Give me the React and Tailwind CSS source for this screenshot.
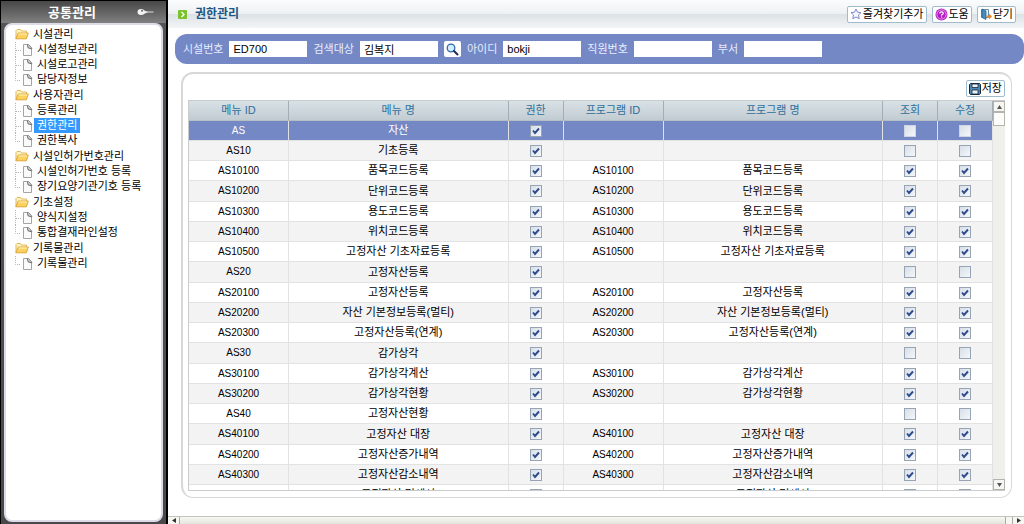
import React, { useState } from "react";

const tree = [
  ["시설관리", ["시설정보관리", "시설로고관리", "담당자정보"]],
  ["사용자관리", ["등록관리", "권한관리", "권한복사"]],
  ["시설인허가번호관리", ["시설인허가번호 등록", "장기요양기관기호 등록"]],
  ["기초설정", ["양식지설정", "통합결재라인설정"]],
  ["기록물관리", ["기록물관리"]],
];

const rows = [
  ["AS", "자산", false],
  ["AS10", "기초등록", false],
  ["AS10100", "품목코드등록", true],
  ["AS10200", "단위코드등록", true],
  ["AS10300", "용도코드등록", true],
  ["AS10400", "위치코드등록", true],
  ["AS10500", "고정자산 기초자료등록", true],
  ["AS20", "고정자산등록", false],
  ["AS20100", "고정자산등록", true],
  ["AS20200", "자산 기본정보등록(멀티)", true],
  ["AS20300", "고정자산등록(연계)", true],
  ["AS30", "감가상각", false],
  ["AS30100", "감가상각계산", true],
  ["AS30200", "감가상각현황", true],
  ["AS40", "고정자산현황", false],
  ["AS40100", "고정자산 대장", true],
  ["AS40200", "고정자산증가내역", true],
  ["AS40300", "고정자산감소내역", true],
  ["AS40400", "고정자산 명세서", true],
];

function FolderIcon() {
  return (
    <svg width="14" height="12" viewBox="0 0 14 12" className="shrink-0" aria-hidden="true">
      <path d="M1 10.500V2.500L2 1.500H5.500L6.500 3H11.500V5" fill="#fdf3c4" stroke="#e4b75a" />
      <path d="M0.800 10.800L3.300 5H13.300L11.300 10.800Z" fill="#fcd25c" stroke="#dca63c" />
      <path d="M3.600 6H12.200" stroke="#fff4c0" />
    </svg>
  );
}

function PageIcon() {
  return (
    <svg width="11" height="12" viewBox="0 0 11 12" className="shrink-0" aria-hidden="true">
      <path d="M1.500 0.500H6.500L9.500 4V11.500H1.500Z" fill="#fafafa" stroke="#a4a4a4" />
      <path d="M5.500 0.500L6 3.800L9.800 4.800" fill="#ddd" stroke="#666" />
      <path d="M6.500 0.500L10 4.500" stroke="#888" />
    </svg>
  );
}

function Branch({ last }) {
  return (
    <svg width="7" height="15" viewBox="0 0 7 15" className="shrink-0" aria-hidden="true">
      <path d={last ? "M0.500 0V8.500H6" : "M0.500 0V15M1 8.500H6"} fill="none" stroke="#b4b4b4" strokeDasharray="1 1" />
    </svg>
  );
}

function Sidebar() {
  return (
    <aside className="flex w-[168px] shrink-0 flex-col border-t border-r-2 border-l border-black bg-linear-to-b from-[#555] to-[#4a484b] px-[3px] pb-[2px]">
      <header className="-mx-[3px] flex h-[22px] shrink-0 items-center bg-linear-to-b from-[#484848] to-[#808080] pr-3 pl-[47px] text-white">
        <h1 className="text-[13px] leading-none font-bold">공통관리</h1>
        <svg width="17" height="8" viewBox="0 0 17 8" className="ml-auto" aria-hidden="true">
          <ellipse cx="4" cy="4" rx="3.500" ry="3" fill="#f4f4f4" />
          <path d="M6 2L11 4L6 6.500Z" fill="#f0f0f0" />
          <path d="M9 4H16.500" stroke="#ddd" />
          <circle cx="5" cy="2.800" r="1" fill="#666" />
        </svg>
      </header>
      <nav className="flex-1 overflow-hidden rounded-lg border-2 border-[#dcdce8] bg-white pt-px pl-[9px]">
        <ul>
          {tree.map(([name, items]) => (
            <li key={name}>
              <a href="#" className="flex h-4 items-center gap-1">
                <FolderIcon />
                {name}
              </a>
              <ul>
                {items.map((item, i) => (
                  <li key={item}>
                    <a href="#" className="flex h-[15px] items-center">
                      <Branch last={i === items.length - 1} />
                      <PageIcon />
                      <span className={item === "권한관리" ? "ml-px bg-[#3399ff] px-[3px] leading-[15px] text-white" : "ml-1"}>{item}</span>
                    </a>
                  </li>
                ))}
              </ul>
            </li>
          ))}
        </ul>
      </nav>
    </aside>
  );
}

function ToolButton({ children }) {
  return (
    <button type="button" className="flex h-[17px] items-center gap-px rounded-xs border border-[#9ebccd] bg-white px-[2px] text-[11px] leading-none whitespace-nowrap text-black">
      {children}
    </button>
  );
}

function TitleBar() {
  return (
    <header className="flex h-7 shrink-0 items-center bg-[linear-gradient(#fbfcfd,#eef1f3_48%,#dce2e6_52%,#f3f5f6)] pr-2 pl-[10px]">
      <svg width="9" height="9" viewBox="0 0 9 9" aria-hidden="true">
        <rect width="9" height="9" rx="1" fill="#7cc22c" />
        <path d="M3.500 2L6 4.500L3.500 7" fill="none" stroke="#fff" strokeWidth="1.300" />
      </svg>
      <h2 className="ml-2 text-[12px] leading-none font-bold text-[#1d5685]">권한관리</h2>
      <div className="ml-auto flex gap-[5px]">
        <ToolButton>
          <svg width="12" height="12" viewBox="0 0 12 12" aria-hidden="true">
            <path d="M6 1L7.500 4.200L11 4.600L8.500 7L9.200 10.700L6 9L2.800 10.700L3.500 7L1 4.600L4.500 4.200Z" fill="#f6f8ff" stroke="#8288c8" />
          </svg>
          즐겨찾기추가
        </ToolButton>
        <ToolButton>
          <svg width="13" height="13" viewBox="0 0 13 13" aria-hidden="true">
            <circle cx="6.500" cy="6.500" r="6" fill="#b41cc4" />
            <circle cx="6.500" cy="6.500" r="4.600" fill="none" stroke="#f0b8f4" strokeWidth="0.800" />
            <path d="M4.800 5.500Q4.800 3.800 6.500 3.800Q8.300 3.800 8.300 5.200Q8.300 6.200 6.600 7V7.700M6.600 8.500V9.500" fill="none" stroke="#fff" strokeWidth="1.200" />
          </svg>
          도움
        </ToolButton>
        <ToolButton>
          <svg width="12" height="12" viewBox="0 0 12 12" aria-hidden="true">
            <path d="M1.500 1.500H8.500V9.500H1.500Z" fill="#e8f2fa" stroke="#6a8ca8" />
            <path d="M2 1L6 3V11.500L2 9.500Z" fill="#3f8fc8" stroke="#285878" strokeWidth="0.700" />
            <path d="M6.500 7.500H9V5.500L12 8.500L9 11.500V9.500H6.500Z" fill="#e8862a" />
          </svg>
          닫기
        </ToolButton>
      </div>
    </header>
  );
}

function Field({ id, label, value = "", children }) {
  return (
    <div className="flex items-center">
      <label htmlFor={id} className="mr-[6px] whitespace-nowrap text-[#e8edff]">{label}</label>
      <input id={id} defaultValue={value} className="h-4 w-[78px] bg-white px-1 text-black outline-none" />
      {children}
    </div>
  );
}

function FilterBar() {
  return (
    <form className="mt-[6px] ml-[7px] flex h-[30px] shrink-0 items-center gap-[6px] rounded-xl bg-[#7488c6] pl-2">
      <Field id="facility" label="시설번호" value="ED700" />
      <Field id="target" label="검색대상" value="김복지">
        <button type="button" aria-label="검색" className="ml-[6px] flex h-4 w-[17px] items-center justify-center rounded-xs bg-white">
          <svg width="13" height="13" viewBox="0 0 13 13" aria-hidden="true">
            <circle cx="5" cy="5" r="3.800" fill="#d4ecff" stroke="#2c68ac" strokeWidth="1.300" />
            <path d="M8 8L11.500 11.500" stroke="#222c4c" strokeWidth="2" strokeLinecap="round" />
          </svg>
        </button>
      </Field>
      <Field id="userid" label="아이디" value="bokji" />
      <Field id="staff" label="직원번호" />
      <Field id="dept" label="부서" />
    </form>
  );
}

function Check({ on, enabled = true, label, selected }) {
  const [checked, setChecked] = useState(on);
  return (
    <span className="mx-auto grid size-3">
      <input
        type="checkbox"
        aria-label={label}
        checked={checked}
        disabled={!enabled}
        onChange={(e) => setChecked(e.target.checked)}
        className={`col-start-1 row-start-1 size-3 appearance-none border bg-linear-to-br from-[#d8dfe8] to-[#f4f7fb] ${selected && !enabled ? "border-[#cfd5e4]" : "border-[#96a4b4]"}`}
      />
      {checked && (
        <svg viewBox="0 0 12 12" className="pointer-events-none col-start-1 row-start-1 size-3" aria-hidden="true">
          <path d="M3 5.500L5 8L9 3.500" fill="none" stroke="#2c4a8c" strokeWidth="1.900" />
        </svg>
      )}
    </span>
  );
}

const heads = ["메뉴 ID", "메뉴 명", "권한", "프로그램 ID", "프로그램 명", "조회", "수정"];

function Columns() {
  return (
    <colgroup>
      <col className="w-[100px]" />
      <col />
      <col className="w-[55px]" />
      <col className="w-[100px]" />
      <col />
      <col className="w-[55px]" />
      <col className="w-[55px]" />
    </colgroup>
  );
}

function Grid() {
  return (
    <div className="flex min-h-0 flex-1 border border-r-0 border-[#c8cccf]">
      <div className="min-w-0 flex-1 overflow-y-auto [scrollbar-width:none]">
        <table className="w-full table-fixed border-separate border-spacing-0 text-center">
          <Columns />
          <thead>
            <tr className="h-5">
              {heads.map((h) => (
                <th key={h} scope="col" className="sticky top-0 border-r border-b border-r-[#a3adb3] border-b-[#b5bfc4] bg-linear-to-b from-[#d9e1e5] to-[#c1ccd2] p-0 font-normal text-[#2d6f9c]">
                  {h}
                </th>
              ))}
            </tr>
          </thead>
          <tbody>
            {rows.map(([id, name, program], i) => {
              const sel = i === 0;
              const cell = "border-r border-b border-[#e2e2e2] p-0 leading-none";
              const code = `${cell} text-[10px]`;
              return (
                <tr key={id} className={`h-5 nth-[4n]:h-[21px] ${sel ? "bg-[#7488c6] text-white" : i % 2 ? "bg-[#f3f3f3]" : "bg-white"}`}>
                  <td className={code}>{id}</td>
                  <td className={cell}>{name}</td>
                  <td className={cell}><Check on label={`${name} 권한`} /></td>
                  <td className={code}>{program && id}</td>
                  <td className={cell}>{program && name}</td>
                  <td className={cell}><Check on={program} enabled={program} selected={sel} label={`${name} 조회`} /></td>
                  <td className={cell}><Check on={program} enabled={program} selected={sel} label={`${name} 수정`} /></td>
                </tr>
              );
            })}
          </tbody>
        </table>
      </div>
      <div className="flex w-3 shrink-0 flex-col bg-[#efefeb]">
        <button type="button" aria-label="위로" className="grid h-[11px] place-items-center border border-[#b4b4ac] bg-[#f6f6f2]">
          <svg width="5" height="4" viewBox="0 0 5 4" aria-hidden="true"><path d="M0 4L2.500 0L5 4Z" fill="#555" /></svg>
        </button>
        <div className="h-[14px] border border-[#b4b4ac] bg-[#fcfcfa]" />
        <button type="button" aria-label="아래로" className="mt-auto grid h-[11px] place-items-center border border-[#b4b4ac] bg-[#f6f6f2]">
          <svg width="5" height="4" viewBox="0 0 5 4" aria-hidden="true"><path d="M0 0L2.500 4L5 0Z" fill="#555" /></svg>
        </button>
      </div>
    </div>
  );
}

function BottomScroll() {
  return (
    <div className="mt-[18px] flex h-2 shrink-0 items-stretch justify-between border-t border-[#c4c4bc] bg-[#f6f6f2]">
      <button type="button" aria-label="왼쪽" className="grid w-3 place-items-center border-r border-[#aaaaa2]">
        <svg width="4" height="5" viewBox="0 0 4 5" aria-hidden="true"><path d="M4 0L0 2.500L4 5Z" fill="#333" /></svg>
      </button>
      <div className="mr-[6px] flex-1 border-r border-[#aaaaa2] bg-linear-to-b from-[#f8f8f4] to-[#e4e4dc]" />
      <button type="button" aria-label="오른쪽" className="grid w-3 place-items-center border-l border-[#aaaaa2]">
        <svg width="4" height="5" viewBox="0 0 4 5" aria-hidden="true"><path d="M0 0L4 2.500L0 5Z" fill="#333" /></svg>
      </button>
    </div>
  );
}

export default function App() {
  return (
    <div className="flex h-screen overflow-hidden bg-white font-['Liberation_Sans','Noto_Sans_CJK_KR',sans-serif] text-[11px] leading-none text-black">
      <Sidebar />
      <main className="flex min-w-0 flex-1 flex-col">
        <TitleBar />
        <FilterBar />
        <section className="mt-2 mr-3 ml-[13px] flex min-h-0 flex-1 flex-col rounded-xl border-t-2 border-r border-b border-l-2 border-[#d8d8d8] pt-[6px] pr-[6px] pb-[6px] pl-[5px]">
          <div className="mb-[3px] flex justify-end">
            <ToolButton>
              <svg width="12" height="12" viewBox="0 0 12 12" aria-hidden="true">
                <path d="M1.500 0.500H10.500L11.500 1.500V10.500L10.500 11.500H1.500L0.500 10.500V1.500Z" fill="#4c88b0" stroke="#16283c" />
                <path d="M3 1H9V4.500H3ZM3 7H9V11H3Z" fill="#e8f2f8" stroke="#16283c" strokeWidth="0.800" />
              </svg>
              저장
            </ToolButton>
          </div>
          <Grid />
        </section>
        <BottomScroll />
      </main>
    </div>
  );
}
